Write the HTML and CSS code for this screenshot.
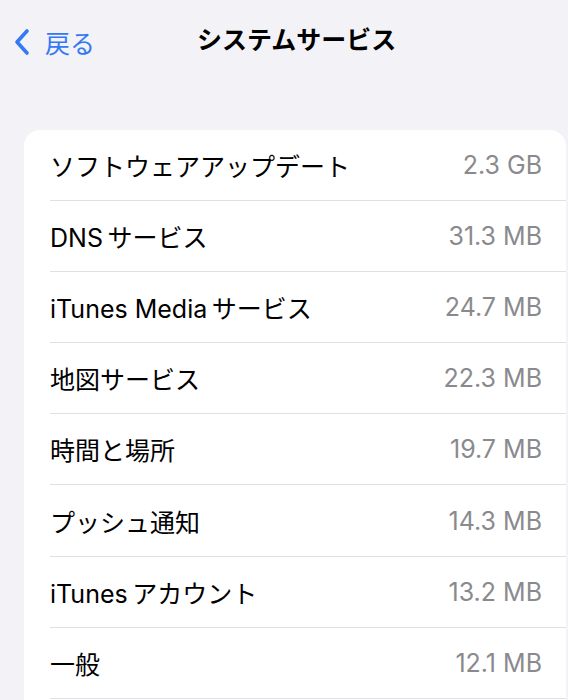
FILE: index.html
```html
<!DOCTYPE html>
<html>
<head>
<meta name="viewport" content="width=device-width, initial-scale=1.0"/>
<link rel="stylesheet" href="styles.css">
</head>
<body>
<div class="navbar">
    <a class="back" href="#">
        <svg class="chev" width="18" height="28" viewBox="0 0 18 28"><path d="M14 3 L4 14 L14 25" fill="none" stroke="#3478f6" stroke-width="3.6" stroke-linecap="round" stroke-linejoin="round"/></svg>
        <span>戻る</span>
    </a>
    <div class="title">システムサービス</div>
</div>

<div class="card">
    <div class="row"><span class="name">ソフトウェアアップデート</span><span class="size">2.3 GB</span></div>
    <div class="row"><span class="name">DNS&#8201;サービス</span><span class="size">31.3 MB</span></div>
    <div class="row"><span class="name">iTunes Media&#8201;サービス</span><span class="size">24.7 MB</span></div>
    <div class="row"><span class="name">地図サービス</span><span class="size">22.3 MB</span></div>
    <div class="row"><span class="name">時間と場所</span><span class="size">19.7 MB</span></div>
    <div class="row"><span class="name">プッシュ通知</span><span class="size">14.3 MB</span></div>
    <div class="row"><span class="name">iTunes&#8201;アカウント</span><span class="size">13.2 MB</span></div>
    <div class="row"><span class="name">一般</span><span class="size">12.1 MB</span></div>
</div>
</body>
</html>
```
FILE: styles.css
```css
body {
    margin: 0;
    background: #f2f2f7;
    font-family: Inter, "Noto Sans CJK JP", sans-serif;
    color: #000;
    width: 568px;
    height: 700px;
    overflow: hidden;
}

.navbar {
    position: relative;
    height: 80px;
}

.back {
    position: absolute;
    left: 13px;
    top: 24px;
    display: flex;
    align-items: center;
    gap: 14px;
    color: #3478f6;
    text-decoration: none;
    font-size: 25px;
}

.title {
    padding-top: 24px;
    padding-left: 197px;
    font-size: 25px;
    font-weight: 700;
    line-height: 32px;
}

.card {
    margin: 50px 2px 0 24px;
    background: #fff;
    border-radius: 16px 16px 0 0;
    padding-left: 26px;
    padding-bottom: 1px;
}

.row {
    display: flex;
    justify-content: space-between;
    align-items: center;
    height: 70.1px;
    border-bottom: 1px solid #e0e0e4;
    padding-right: 24px;
    font-size: 25px;
}

.size {
    color: #8a8a8e;
}
```
